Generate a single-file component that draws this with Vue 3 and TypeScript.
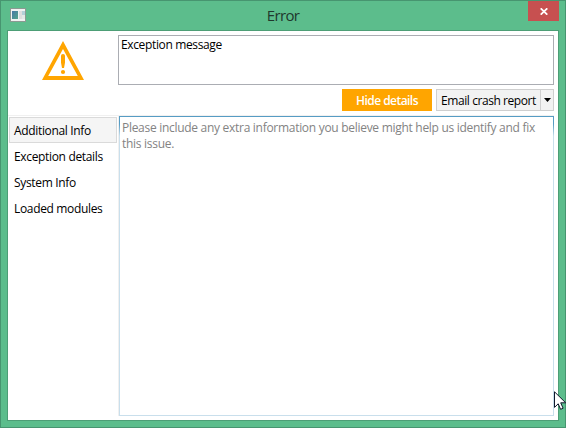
<script setup lang="ts">
import { ref } from 'vue'

const tabs: string[] = ['Additional Info', 'Exception details', 'System Info', 'Loaded modules']
const selected = ref<number>(0)
</script>

<template>
  <div class="window">
    <header class="titlebar">
      <svg class="app-icon" width="16" height="14" viewBox="0 0 16 14" shape-rendering="crispEdges">
        <defs>
          <linearGradient id="pane" x1="0" y1="0" x2="1" y2="1">
            <stop offset="0" stop-color="#4978a6" />
            <stop offset="1" stop-color="#55a58b" />
          </linearGradient>
        </defs>
        <rect x="0" y="0" width="16" height="14" fill="#8b9a92" />
        <rect x="1" y="1" width="14" height="12" fill="#f2f2f2" />
        <rect x="2" y="3" width="6" height="8" fill="url(#pane)" />
        <rect x="9" y="3" width="3" height="8" fill="#dedede" />
        <rect x="12" y="3" width="3" height="4" fill="#b4d0d8" />
        <rect x="12" y="7" width="3" height="4" fill="#e4e9e6" />
      </svg>
      <h1 class="title">Error</h1>
      <button class="close" aria-label="Close">
        <svg width="8" height="7" viewBox="0 0 8 7">
          <path d="M.7 .3 7.3 6.7M7.3 .3 .7 6.7" stroke="#fff" stroke-width="1.7" />
        </svg>
      </button>
    </header>

    <main class="client">
      <section class="summary">
        <div class="warning">
          <svg width="42" height="39" viewBox="0 0 42 39">
            <path fill="#ffa500" fill-rule="evenodd" d="M21 0 42 39H0ZM21 8 6.2 35H35.8Z" />
            <path fill="#ffa500" d="M19 14.5Q19 13 21 13T23 14.5V21.5L22 27H20L19 21.5Z" />
            <ellipse cx="21" cy="31" rx="2.1" ry="1.9" fill="#ffa500" />
          </svg>
        </div>
        <div class="message"><span>Exception message</span></div>
      </section>

      <div class="actions">
        <button class="hide"><span>Hide details</span></button>
        <div class="split">
          <button class="email"><span>Email crash report</span></button>
          <button class="drop" aria-label="More">
            <svg width="7" height="4" viewBox="0 0 7 4"><path d="M0 0H7L3.5 4Z" fill="#000" /></svg>
          </button>
        </div>
      </div>

      <section class="details">
        <nav class="tabs">
          <button
            v-for="(tab, i) in tabs"
            :key="tab"
            class="tab"
            :class="{ active: i === selected }"
            @click="selected = i"
          >{{ tab }}</button>
        </nav>
        <div class="notes">
          <p>Please include any extra information you believe might help us identify and fix<br />this issue.</p>
        </div>
      </section>
    </main>

    <svg class="cursor" width="12" height="19" viewBox="0 0 12 19">
      <path d="M.5 .8V16.4L4.2 12.8 6.6 18.3 9.1 17.2 6.7 11.8H11.7Z" fill="#fff" stroke="#10182c" />
    </svg>
  </div>
</template>

<style>
body {
  overflow: hidden;
}
</style>

<style scoped>
* {
  box-sizing: border-box;
  margin: 0;
}
button {
  padding: 0;
  border: 0;
  background: none;
  font: inherit;
  letter-spacing: inherit;
  color: inherit;
}
.window {
  position: relative;
  width: 566px;
  height: 428px;
  padding: 0 6px 6px;
  border: 1px solid #479570;
  background: #5cbd8c;
  font-family: 'Open Sans', 'Noto Sans', sans-serif;
  font-size: 12px;
  line-height: 16px;
  letter-spacing: -0.29px;
  color: #000;
  display: flex;
  flex-direction: column;
}
.titlebar {
  height: 29px;
  flex: none;
  display: grid;
  grid-template-columns: 31px 1fr 31px;
}
.app-icon {
  margin: 7px 0 0 3px;
}
.title {
  font-size: 15px;
  font-weight: 400;
  line-height: 28px;
  letter-spacing: -0.65px;
  text-align: center;
  color: #20382c;
}
.close {
  height: 20px;
  display: flex;
  align-items: center;
  justify-content: center;
  background: #c75050;
}
.client {
  flex: 1;
  min-height: 0;
  padding: 4px 4px 4px 0;
  border: 1px solid #4d9e76;
  background: #fff;
  display: flex;
  flex-direction: column;
}
.summary {
  display: flex;
  height: 50px;
}
.warning {
  width: 110px;
  padding: 6px 0 0 34px;
}
.warning svg {
  display: block;
}
.message {
  flex: 1;
  border: 1px solid #abadb3;
  padding: 1px 2px;
  letter-spacing: -0.36px;
}
.actions {
  display: flex;
  justify-content: flex-end;
  gap: 4px;
  height: 22px;
  margin-top: 4px;
}
.hide {
  width: 90px;
  padding-top: 2px;
  background: #ffa500;
  color: #fff;
  font-weight: 600;
  letter-spacing: -0.55px;
}
.split {
  width: 118px;
  display: flex;
  border: 1px solid #cfcfcf;
  background: #f2f2f2;
}
.email {
  flex: 1;
  padding-top: 2px;
  letter-spacing: -0.43px;
}
.drop {
  width: 13px;
  border-left: 1px solid #cfcfcf;
  display: flex;
  align-items: center;
  justify-content: center;
}
.details {
  flex: 1;
  min-height: 0;
  margin-top: 4px;
  border-top: 1px solid #f0f0f0;
  display: flex;
}
.tabs {
  width: 110px;
  padding: 1px 1px 0;
  display: flex;
  flex-direction: column;
  letter-spacing: -0.34px;
}
.tab {
  height: 26px;
  padding: 2px 4px 0;
  border: 1px solid transparent;
  text-align: left;
}
.tab.active {
  border-color: #dadada;
  background: #f5f5f5;
}
.notes {
  flex: 1;
  margin-left: 1px;
  padding: 3px 2px;
  border: 1px solid;
  border-image: linear-gradient(#569cc4 0, #569cc4 8px, #c9dfec 20px) 1;
  box-shadow: -1px 0 #f0f0f0;
  color: #838383;
  white-space: nowrap;
}
.cursor {
  position: absolute;
  left: 553px;
  top: 390px;
}
</style>
